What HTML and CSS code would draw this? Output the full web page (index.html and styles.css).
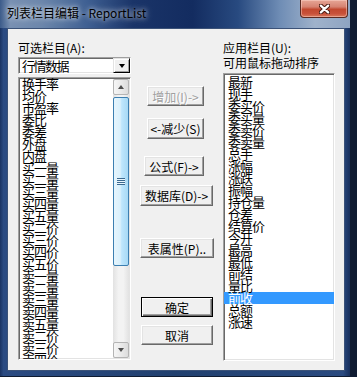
FILE: index.html
```html
<!DOCTYPE html>
<html lang="zh-CN">
  <head>
    <meta charset="UTF-8" />
    <title>列表栏目编辑 - ReportList</title>
    <link rel="stylesheet" href="styles.css">
  </head>

  <body>
    <div class="window">
      <div class="titlebar">
        <span class="title">列表栏目编辑 - ReportList</span>
        <button class="close" title="关闭">
          <svg width="11" height="10" viewBox="0 0 11 10">
            <path d="M1.8 1.6 L9.2 8.4 M9.2 1.6 L1.8 8.4" stroke="#4a1c14" stroke-width="4.2" stroke-linecap="round" />
            <path d="M1.8 1.6 L9.2 8.4 M9.2 1.6 L1.8 8.4" stroke="#ffffff" stroke-width="2.2" stroke-linecap="round" />
          </svg>
        </button>
      </div>

      <div class="client">
        <!-- available columns -->
        <div class="col col--left">
          <label class="caption">可选栏目(A):</label>
          <div class="combo">
            <span class="combo__text">行情数据</span>
            <span class="combo__btn raised"><i class="arrow-down"></i></span>
          </div>
          <div class="listbox listbox--left">
            <ul class="items">
              <li>换手率</li>
              <li>均价</li>
              <li>市盈率</li>
              <li>委比</li>
              <li>委差</li>
              <li>外盘</li>
              <li>内盘</li>
              <li>买一量</li>
              <li>买二量</li>
              <li>买三量</li>
              <li>买四量</li>
              <li>买五量</li>
              <li>买二价</li>
              <li>买三价</li>
              <li>买四价</li>
              <li>买五价</li>
              <li>卖一量</li>
              <li>卖二量</li>
              <li>卖三量</li>
              <li>卖四量</li>
              <li>卖五量</li>
              <li>卖二价</li>
              <li>卖三价</li>
              <li>卖四价</li>
              <li>卖五价</li>
            </ul>
            <div class="scrollbar">
              <div class="scrollbar__arrow"><i class="tri tri--up"></i></div>
              <div class="scrollbar__thumb"><i class="grip"></i></div>
              <div class="scrollbar__arrow"><i class="tri tri--down"></i></div>
            </div>
          </div>
        </div>

        <!-- actions -->
        <div class="col col--mid">
          <button class="btn btn--add" disabled>增加(I)-&gt;</button>
          <button class="btn btn--remove">&lt;-减少(S)</button>
          <button class="btn btn--formula">公式(F)-&gt;</button>
          <button class="btn btn--db">数据库(D)-&gt;</button>
          <button class="btn btn--props">表属性(P)..</button>
          <button class="btn btn--ok btn--default">确定</button>
          <button class="btn btn--cancel">取消</button>
        </div>

        <!-- applied columns -->
        <div class="col col--right">
          <label class="caption">应用栏目(U):</label>
          <span class="caption">可用鼠标拖动排序</span>
          <div class="listbox listbox--right">
            <ul class="items">
              <li>最新</li>
              <li>现手</li>
              <li>委买价</li>
              <li>委买量</li>
              <li>委卖价</li>
              <li>委卖量</li>
              <li>总手</li>
              <li>涨幅</li>
              <li>涨跌</li>
              <li>振幅</li>
              <li>持仓量</li>
              <li>仓差</li>
              <li>结算价</li>
              <li>今开</li>
              <li>最高</li>
              <li>最低</li>
              <li>前结</li>
              <li>量比</li>
              <li class="selected">前收</li>
              <li>总额</li>
              <li>涨速</li>
            </ul>
          </div>
        </div>
      </div>
    </div>
  </body>
</html>
```

FILE: styles.css
```css
* {
  margin: 0;
  padding: 0;
  box-sizing: border-box;
}

body {
  width: 357px;
  height: 377px;
  overflow: hidden;
  background: #0f1b31;
  font-family: "Noto Sans CJK SC", "Liberation Sans", sans-serif;
  font-size: 12px;
  color: #000000;
}

.window {
  width: 350px;
  height: 376px;
  display: flex;
  flex-direction: column;
  background: linear-gradient(90deg, #1a3362 0%, #2b4b82 1%, #21406f 50%, #2a4a80 98%, #172f5c 100%);
}

/* title bar */
.titlebar {
  height: 28px;
  display: flex;
  align-items: flex-start;
  background: linear-gradient(90deg, #3c5b8a 0%, #7890b2 3%, #6b86ab 12%, #3e5f92 25%, #1a3468 38%, #132c60 55%, #284a80 68%, #6f8db5 80%, #9fb2cb 90%, #8ea4c2 100%);
}
.title {
  flex: 1;
  padding: 7px 0 0 7px;
  line-height: 12px;
  font-size: 12px;
  white-space: nowrap;
  color: #000000;
  text-shadow: 0 0 5px rgba(255, 255, 255, 0.8), 0 0 9px rgba(255, 255, 255, 0.5);
}
.close {
  width: 48px;
  height: 18px;
  margin-right: 2px;
  display: flex;
  align-items: center;
  justify-content: center;
  border: 1px solid #5b2a22;
  border-top: none;
  border-radius: 0 0 4px 4px;
  background: linear-gradient(180deg, #e6a696 0%, #d68372 40%, #c2482f 55%, #c8513a 80%, #d8785c 100%);
  box-shadow: inset 0 0 0 1px rgba(255, 220, 210, 0.45);
}

/* client area */
.client {
  margin-left: 7px;
  width: 338px;
  height: 343px;
  display: flex;
  background: #f0f0f0;
  border: 1px solid #3b5278;
}
.col {
  display: flex;
  flex-direction: column;
}
.col--left {
  margin-left: 10px;
  width: 113px;
  padding-top: 11px;
}
.col--mid {
  margin-left: 9px;
  width: 74px;
  padding-top: 57px;
  align-items: flex-start;
}
.col--right {
  margin-left: 9px;
  width: 112px;
  padding-top: 11px;
}
.caption {
  height: 15px;
  line-height: 15px;
  white-space: nowrap;
}

/* combo box */
.combo {
  margin-top: 2px;
  height: 17px;
  display: flex;
  background: #ffffff;
  border: 1px solid;
  border-color: #a0a0a0 #ffffff #ffffff #a0a0a0;
  box-shadow: inset 1px 1px 0 #696969, inset -1px -1px 0 #e3e3e3;
}
.combo__text {
  flex: 1;
  padding-left: 3px;
  line-height: 15px;
  font-size: 13px;
  letter-spacing: -1.5px;
}
.combo__btn {
  width: 17px;
  height: 15px;
  display: flex;
  align-items: center;
  justify-content: center;
}
.raised {
  background: #f0f0f0;
  border: 1px solid;
  border-color: #e3e3e3 #000000 #000000 #e3e3e3;
  box-shadow: inset 1px 1px 0 #ffffff, inset -1px -1px 0 #a0a0a0;
}
.arrow-down {
  width: 0;
  height: 0;
  border-left: 3.5px solid transparent;
  border-right: 3.5px solid transparent;
  border-top: 4px solid #000000;
}

/* list boxes */
.listbox {
  display: flex;
  overflow: hidden;
  background: #ffffff;
  border: 1px solid;
  border-color: #a0a0a0 #ffffff #ffffff #a0a0a0;
  box-shadow: inset 1px 1px 0 #696969, inset -1px -1px 0 #e3e3e3;
}
.listbox--left {
  margin-top: 3px;
  height: 283px;
}
.listbox--right {
  margin-top: 3px;
  height: 288px;
}
.items {
  flex: 1;
  list-style: none;
  overflow: hidden;
}
.items li {
  height: 12px;
  line-height: 12px;
  font-size: 13px;
  letter-spacing: -1px;
  white-space: nowrap;
}
.listbox--left .items li {
  padding-left: 3px;
}
.listbox--right .items {
  padding-top: 2px;
}
.listbox--right .items li {
  padding-left: 4px;
}
.items li.selected {
  background: #3399ff;
  color: #ffffff;
}

/* scrollbar */
.scrollbar {
  width: 16px;
  margin: 1px 1px 1px 0;
  display: flex;
  flex-direction: column;
  justify-content: space-between;
  background: linear-gradient(90deg, #e2e2e2 0%, #f3f3f3 35%, #f3f3f3 65%, #e2e2e2 100%);
}
.scrollbar__arrow {
  height: 16px;
  display: flex;
  align-items: center;
  justify-content: center;
  border: 1px solid #b4b4b4;
  border-radius: 2px;
  background: linear-gradient(90deg, #f6f6f6 0%, #eaeaea 50%, #dcdcdc 100%);
}
.tri {
  width: 0;
  height: 0;
  border-left: 3.5px solid transparent;
  border-right: 3.5px solid transparent;
}
.tri--up {
  border-bottom: 4px solid #4d4d4d;
}
.tri--down {
  border-top: 4px solid #4d4d4d;
}
.scrollbar__thumb {
  height: 169px;
  margin-top: 2px;
  margin-bottom: auto;
  display: flex;
  align-items: center;
  justify-content: center;
  border: 1px solid #3c7fb1;
  border-radius: 2px;
  background: linear-gradient(90deg, #e6f5fd 0%, #d9f0fc 45%, #bee6fd 55%, #a7d9f5 100%);
}
.grip {
  width: 8px;
  height: 7px;
  background: repeating-linear-gradient(180deg, #3b6a91 0 1px, #eaf6fd 1px 2px);
}

/* push buttons */
.btn {
  height: 20px;
  display: flex;
  align-items: center;
  justify-content: center;
  font: inherit;
  font-size: 12px;
  white-space: nowrap;
  color: #000000;
  background: #f0f0f0;
  border: 1px solid;
  border-color: #ffffff #696969 #696969 #ffffff;
  box-shadow: inset -1px -1px 0 #a0a0a0, inset 1px 1px 0 #e3e3e3;
}
.btn:disabled {
  color: #a0a0a0;
  text-shadow: 1px 1px 0 #ffffff;
}
.btn--default {
  border-color: #000000;
  box-shadow: inset 1px 1px 0 #ffffff, inset -1px -1px 0 #696969, inset -2px -2px 0 #a0a0a0;
}
.btn--add {
  margin-left: 7px;
  width: 57px;
}
.btn--remove {
  margin-top: 12px;
  margin-left: 7px;
  width: 57px;
  height: 21px;
}
.btn--formula {
  margin-top: 17px;
  margin-left: 4px;
  width: 60px;
}
.btn--db {
  margin-top: 9px;
  width: 73px;
  height: 21px;
}
.btn--props {
  margin-top: 32px;
  width: 74px;
}
.btn--ok {
  margin-top: 39px;
  margin-left: 1px;
  width: 72px;
}
.btn--cancel {
  margin-top: 8px;
  margin-left: 1px;
  width: 72px;
}
```
